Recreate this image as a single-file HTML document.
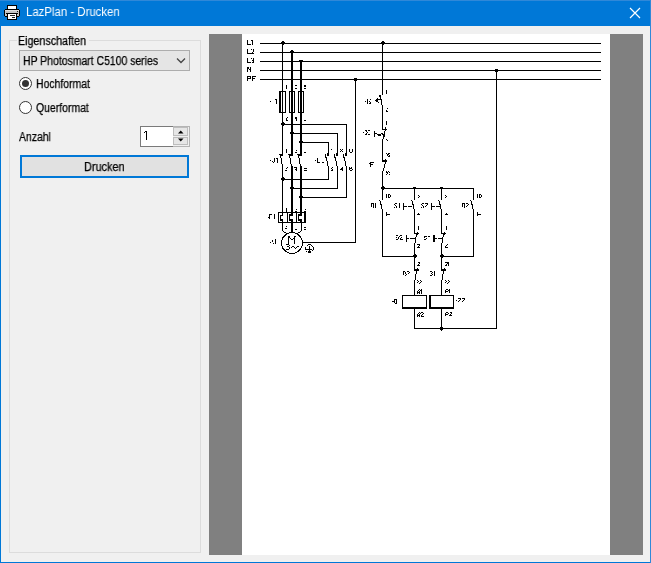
<!DOCTYPE html>
<html><head><meta charset="utf-8">
<style>
html,body{margin:0;padding:0;}
body{width:651px;height:563px;position:relative;overflow:hidden;background:#0078d7;font-family:"Liberation Sans",sans-serif;}
.abs{position:absolute;}
#client{position:absolute;left:1px;top:26px;width:649px;height:536px;background:#f0f0f0;}
.t{position:absolute;white-space:nowrap;font-size:12px;line-height:14px;color:#000;transform-origin:0 0;-webkit-text-stroke:0.25px currentColor;will-change:transform;}
#title{left:26px;top:5px;color:#fff;font-size:12px;}
#grp{position:absolute;left:9px;top:40px;width:190px;height:511px;border:1px solid #dcdcdc;}
#grpcap{left:17px;top:34px;background:#f0f0f0;padding:0 3px 0 1px;}
#combo{position:absolute;left:19px;top:50px;width:169px;height:19px;border:1px solid #adadad;background:#e5e5e5;}
.radio{position:absolute;width:13px;height:13px;box-sizing:border-box;border:1.4px solid #333;border-radius:50%;background:#fff;}
#spin{position:absolute;left:140px;top:126px;width:48px;height:19px;border:1px solid #b4b4b4;background:#f0f0f0;}
#btn{position:absolute;left:20px;top:155px;width:165px;height:19px;border:2px solid #0078d7;background:#e1e1e1;}
#gray{position:absolute;left:209px;top:34px;width:434px;height:521px;background:#808080;}
#page{position:absolute;left:242px;top:34px;width:368px;height:521px;background:#fff;}
svg{position:absolute;left:0;top:0;}
</style></head><body>
<div id="client"></div>
<div class="abs" style="left:0;top:0;width:651px;height:1px;background:#3088d8"></div>
<div class="abs" style="left:650px;top:0;width:1px;height:563px;background:#3088d8"></div>
<!-- title bar -->
<svg width="26" height="26" style="left:0;top:0" shape-rendering="crispEdges">
  <rect x="7" y="5" width="10" height="5" fill="#000"/>
  <rect x="8" y="6" width="8" height="3" fill="#fff"/>
  <rect x="5" y="9" width="14" height="8" fill="#000"/>
  <rect x="4" y="10" width="16" height="6" fill="#000"/>
  <rect x="5" y="10" width="14" height="6" fill="#c4c4c4"/>
  <rect x="5" y="10" width="14" height="1" fill="#dedede"/>
  <rect x="17" y="11" width="1" height="1" fill="#222"/>
  <rect x="6" y="13" width="12" height="1" fill="#000"/>
  <rect x="7" y="13" width="10" height="7" fill="#000"/>
  <rect x="8" y="14" width="8" height="5" fill="#fff"/>
  <rect x="10" y="15" width="5" height="1" fill="#222"/>
  <rect x="12" y="17" width="3" height="1" fill="#222"/>
</svg>
<div class="t" id="title" style="transform:scaleX(0.95);-webkit-text-stroke:0">LazPlan - Drucken</div>
<svg width="651" height="26" style="left:0;top:0">
  <path d="M630 8 L640 18 M640 8 L630 18" stroke="#fff" stroke-width="1.2"/>
</svg>
<div id="grp"></div>
<div class="t" id="grpcap" style="transform:scaleX(0.895)">Eigenschaften</div>
<div id="combo"></div>
<div class="t" style="left:23px;top:54px;transform:scaleX(0.87)">HP Photosmart C5100 series</div>
<svg width="651" height="200" style="left:0;top:0">
  <path d="M177 58.5 L181 62.5 L185 58.5" fill="none" stroke="#444" stroke-width="1.3"/>
</svg>
<div class="radio" style="left:19px;top:77px"></div>
<div class="abs" style="left:22px;top:80px;width:7px;height:7px;border-radius:50%;background:#333"></div>
<div class="t" style="left:36px;top:77px;transform:scaleX(0.87)">Hochformat</div>
<div class="radio" style="left:19px;top:101px"></div>
<div class="t" style="left:36px;top:101px;transform:scaleX(0.87)">Querformat</div>
<div class="t" style="left:19px;top:130px;transform:scaleX(0.87)">Anzahl</div>
<div id="spin"></div>
<div class="abs" style="left:140px;top:126px;width:32px;height:19px;border:1px solid #7a7a7a;border-right:none;background:#fff"></div>
<svg width="651" height="200" style="left:0;top:0" shape-rendering="crispEdges">
  <rect x="144" y="132" width="1" height="1" fill="#000"/>
  <rect x="145" y="131" width="1" height="1" fill="#000"/>
  <rect x="146" y="131" width="1" height="9" fill="#000"/>
</svg>
<div class="abs" style="left:173px;top:127px;width:15px;height:9px;background:#e6e6e6;border:1px solid #bdbdbd;box-sizing:border-box"></div>
<div class="abs" style="left:173px;top:137px;width:15px;height:8px;background:#e6e6e6;border:1px solid #bdbdbd;box-sizing:border-box"></div>
<svg width="651" height="200" style="left:0;top:0">
  <path d="M178 133.5 L183.5 133.5 L180.75 130.5 Z" fill="#000"/>
  <path d="M178 138.5 L183.5 138.5 L180.75 141.5 Z" fill="#000"/>
</svg>
<div id="btn"></div>
<div class="t" style="left:84px;top:160px;transform:scaleX(0.91)">Drucken</div>
<div id="gray"></div>
<div id="page"></div>
<svg id="sch" width="651" height="563" style="left:0;top:0" shape-rendering="crispEdges"><g fill="#000"><rect x="260" y="43" width="341" height="1"/><rect x="247" y="40" width="1" height="1"/><rect x="251" y="40" width="1" height="1"/><rect x="252" y="40" width="1" height="1"/><rect x="247" y="41" width="1" height="1"/><rect x="252" y="41" width="1" height="1"/><rect x="247" y="42" width="1" height="1"/><rect x="252" y="42" width="1" height="1"/><rect x="247" y="43" width="1" height="1"/><rect x="252" y="43" width="1" height="1"/><rect x="247" y="44" width="1" height="1"/><rect x="248" y="44" width="1" height="1"/><rect x="249" y="44" width="1" height="1"/><rect x="250" y="44" width="1" height="1"/><rect x="252" y="44" width="1" height="1"/><rect x="260" y="52" width="341" height="1"/><rect x="247" y="49" width="1" height="1"/><rect x="251" y="49" width="1" height="1"/><rect x="253" y="49" width="1" height="1"/><rect x="247" y="50" width="1" height="1"/><rect x="253" y="50" width="1" height="1"/><rect x="247" y="51" width="1" height="1"/><rect x="253" y="51" width="1" height="1"/><rect x="247" y="52" width="1" height="1"/><rect x="252" y="52" width="1" height="1"/><rect x="247" y="53" width="1" height="1"/><rect x="248" y="53" width="1" height="1"/><rect x="249" y="53" width="1" height="1"/><rect x="250" y="53" width="1" height="1"/><rect x="251" y="53" width="1" height="1"/><rect x="252" y="53" width="1" height="1"/><rect x="253" y="53" width="1" height="1"/><rect x="260" y="61" width="341" height="1"/><rect x="247" y="58" width="1" height="1"/><rect x="251" y="58" width="1" height="1"/><rect x="253" y="58" width="1" height="1"/><rect x="247" y="59" width="1" height="1"/><rect x="253" y="59" width="1" height="1"/><rect x="247" y="60" width="1" height="1"/><rect x="252" y="60" width="1" height="1"/><rect x="253" y="60" width="1" height="1"/><rect x="247" y="61" width="1" height="1"/><rect x="253" y="61" width="1" height="1"/><rect x="247" y="62" width="1" height="1"/><rect x="248" y="62" width="1" height="1"/><rect x="249" y="62" width="1" height="1"/><rect x="250" y="62" width="1" height="1"/><rect x="252" y="62" width="1" height="1"/><rect x="253" y="62" width="1" height="1"/><rect x="260" y="70" width="341" height="1"/><rect x="247" y="67" width="1" height="1"/><rect x="248" y="67" width="1" height="1"/><rect x="250" y="67" width="1" height="1"/><rect x="247" y="68" width="1" height="1"/><rect x="248" y="68" width="1" height="1"/><rect x="250" y="68" width="1" height="1"/><rect x="247" y="69" width="1" height="1"/><rect x="249" y="69" width="1" height="1"/><rect x="250" y="69" width="1" height="1"/><rect x="247" y="70" width="1" height="1"/><rect x="250" y="70" width="1" height="1"/><rect x="247" y="71" width="1" height="1"/><rect x="250" y="71" width="1" height="1"/><rect x="260" y="79" width="341" height="1"/><rect x="247" y="76" width="1" height="1"/><rect x="248" y="76" width="1" height="1"/><rect x="249" y="76" width="1" height="1"/><rect x="250" y="76" width="1" height="1"/><rect x="252" y="76" width="1" height="1"/><rect x="253" y="76" width="1" height="1"/><rect x="254" y="76" width="1" height="1"/><rect x="255" y="76" width="1" height="1"/><rect x="247" y="77" width="1" height="1"/><rect x="250" y="77" width="1" height="1"/><rect x="252" y="77" width="1" height="1"/><rect x="247" y="78" width="1" height="1"/><rect x="248" y="78" width="1" height="1"/><rect x="249" y="78" width="1" height="1"/><rect x="250" y="78" width="1" height="1"/><rect x="252" y="78" width="1" height="1"/><rect x="253" y="78" width="1" height="1"/><rect x="254" y="78" width="1" height="1"/><rect x="247" y="79" width="1" height="1"/><rect x="252" y="79" width="1" height="1"/><rect x="247" y="80" width="1" height="1"/><rect x="252" y="80" width="1" height="1"/><rect x="282" y="43" width="1" height="113"/><rect x="282" y="164" width="1" height="52"/><rect x="282" y="219" width="1" height="4"/><rect x="281" y="42" width="4" height="2"/><rect x="282" y="41" width="2" height="1"/><rect x="282" y="44" width="2" height="1"/><rect x="291" y="52" width="2" height="104"/><rect x="291" y="166" width="2" height="50"/><rect x="291" y="219" width="2" height="14"/><rect x="290" y="51" width="4" height="2"/><rect x="291" y="50" width="2" height="1"/><rect x="291" y="53" width="2" height="1"/><rect x="299" y="60" width="4" height="1"/><rect x="300" y="60" width="2" height="96"/><rect x="300" y="166" width="2" height="50"/><rect x="300" y="219" width="2" height="4"/><rect x="279" y="91" width="7" height="1"/><rect x="279" y="112" width="7" height="1"/><rect x="279" y="91" width="2" height="22"/><rect x="285" y="91" width="1" height="22"/><rect x="289" y="91" width="6" height="1"/><rect x="289" y="112" width="6" height="1"/><rect x="289" y="91" width="1" height="22"/><rect x="294" y="91" width="1" height="22"/><rect x="298" y="91" width="6" height="1"/><rect x="298" y="112" width="6" height="1"/><rect x="298" y="91" width="1" height="22"/><rect x="303" y="91" width="1" height="22"/><rect x="286" y="85" width="1" height="1"/><rect x="286" y="86" width="1" height="1"/><rect x="286" y="87" width="1" height="1"/><rect x="286" y="88" width="1" height="1"/><rect x="295" y="85" width="1" height="1"/><rect x="296" y="85" width="1" height="1"/><rect x="295" y="88" width="1" height="1"/><rect x="296" y="88" width="1" height="1"/><rect x="304" y="85" width="1" height="1"/><rect x="305" y="85" width="1" height="1"/><rect x="304" y="86" width="1" height="1"/><rect x="305" y="86" width="1" height="1"/><rect x="304" y="88" width="1" height="1"/><rect x="305" y="88" width="1" height="1"/><rect x="287" y="117" width="1" height="1"/><rect x="286" y="118" width="1" height="1"/><rect x="286" y="119" width="1" height="1"/><rect x="286" y="120" width="1" height="1"/><rect x="287" y="120" width="1" height="1"/><rect x="295" y="117" width="1" height="1"/><rect x="296" y="117" width="1" height="1"/><rect x="295" y="118" width="1" height="1"/><rect x="296" y="118" width="1" height="1"/><rect x="296" y="119" width="1" height="1"/><rect x="296" y="120" width="1" height="1"/><rect x="304" y="120" width="1" height="1"/><rect x="305" y="120" width="1" height="1"/><rect x="270" y="101" width="1" height="1"/><rect x="275" y="99" width="2" height="1"/><rect x="276" y="99" width="1" height="5"/><rect x="282" y="124" width="65" height="1"/><rect x="281" y="123" width="4" height="2"/><rect x="282" y="122" width="2" height="1"/><rect x="282" y="125" width="2" height="1"/><rect x="291" y="133" width="47" height="1"/><rect x="290" y="132" width="4" height="2"/><rect x="291" y="131" width="2" height="1"/><rect x="291" y="134" width="2" height="1"/><rect x="300" y="142" width="29" height="1"/><rect x="299" y="141" width="4" height="2"/><rect x="300" y="140" width="2" height="1"/><rect x="300" y="143" width="2" height="1"/><rect x="328" y="142" width="1" height="14"/><rect x="328" y="166" width="1" height="14"/><rect x="337" y="133" width="1" height="23"/><rect x="337" y="166" width="1" height="23"/><rect x="346" y="124" width="1" height="32"/><rect x="346" y="166" width="1" height="32"/><rect x="282" y="179" width="47" height="1"/><rect x="281" y="178" width="4" height="2"/><rect x="282" y="177" width="2" height="1"/><rect x="282" y="180" width="2" height="1"/><rect x="291" y="188" width="47" height="1"/><rect x="290" y="187" width="4" height="2"/><rect x="291" y="186" width="2" height="1"/><rect x="291" y="189" width="2" height="1"/><rect x="300" y="197" width="47" height="1"/><rect x="299" y="196" width="4" height="2"/><rect x="300" y="195" width="2" height="1"/><rect x="300" y="198" width="2" height="1"/><rect x="279" y="154" width="4" height="1"/><rect x="280" y="155" width="3" height="1"/><rect x="280" y="156" width="1" height="2"/><rect x="281" y="158" width="1" height="6"/><rect x="288" y="154" width="5" height="1"/><rect x="289" y="155" width="4" height="1"/><rect x="289" y="156" width="1" height="2"/><rect x="290" y="158" width="1" height="6"/><rect x="291" y="164" width="1" height="2"/><rect x="297" y="154" width="5" height="1"/><rect x="298" y="155" width="4" height="1"/><rect x="298" y="156" width="1" height="2"/><rect x="299" y="158" width="1" height="6"/><rect x="300" y="164" width="1" height="2"/><rect x="286" y="149" width="1" height="1"/><rect x="286" y="150" width="1" height="1"/><rect x="286" y="151" width="1" height="1"/><rect x="286" y="152" width="1" height="1"/><rect x="296" y="150" width="1" height="1"/><rect x="295" y="152" width="1" height="1"/><rect x="296" y="152" width="1" height="1"/><rect x="304" y="152" width="1" height="1"/><rect x="305" y="152" width="1" height="1"/><rect x="287" y="167" width="1" height="1"/><rect x="286" y="168" width="1" height="1"/><rect x="285" y="170" width="1" height="1"/><rect x="286" y="170" width="1" height="1"/><rect x="294" y="167" width="1" height="1"/><rect x="295" y="167" width="1" height="1"/><rect x="296" y="167" width="1" height="1"/><rect x="296" y="168" width="1" height="1"/><rect x="295" y="169" width="1" height="1"/><rect x="296" y="169" width="1" height="1"/><rect x="296" y="170" width="1" height="1"/><rect x="304" y="168" width="1" height="1"/><rect x="305" y="168" width="1" height="1"/><rect x="306" y="168" width="1" height="1"/><rect x="304" y="170" width="1" height="1"/><rect x="305" y="170" width="1" height="1"/><rect x="306" y="170" width="1" height="1"/><rect x="270" y="160" width="1" height="1"/><rect x="274" y="158" width="1" height="1"/><rect x="274" y="159" width="1" height="1"/><rect x="274" y="160" width="1" height="1"/><rect x="272" y="161" width="1" height="1"/><rect x="274" y="161" width="1" height="1"/><rect x="273" y="162" width="1" height="1"/><rect x="276" y="158" width="1" height="1"/><rect x="277" y="158" width="1" height="1"/><rect x="277" y="159" width="1" height="1"/><rect x="277" y="160" width="1" height="1"/><rect x="277" y="161" width="1" height="1"/><rect x="277" y="162" width="1" height="1"/><rect x="327" y="153" width="2" height="3"/><rect x="325" y="154" width="1" height="4"/><rect x="326" y="157" width="1" height="4"/><rect x="327" y="161" width="1" height="5"/><rect x="336" y="153" width="2" height="3"/><rect x="334" y="154" width="1" height="4"/><rect x="335" y="157" width="1" height="4"/><rect x="336" y="161" width="1" height="5"/><rect x="345" y="153" width="2" height="3"/><rect x="343" y="154" width="1" height="4"/><rect x="344" y="157" width="1" height="4"/><rect x="345" y="161" width="1" height="5"/><rect x="331" y="149" width="1" height="1"/><rect x="340" y="149" width="1" height="1"/><rect x="342" y="149" width="1" height="1"/><rect x="341" y="150" width="1" height="1"/><rect x="340" y="151" width="1" height="1"/><rect x="342" y="151" width="1" height="1"/><rect x="349" y="149" width="1" height="1"/><rect x="352" y="149" width="1" height="1"/><rect x="349" y="150" width="1" height="1"/><rect x="352" y="150" width="1" height="1"/><rect x="349" y="151" width="1" height="1"/><rect x="352" y="151" width="1" height="1"/><rect x="350" y="152" width="1" height="1"/><rect x="351" y="152" width="1" height="1"/><rect x="332" y="167" width="1" height="1"/><rect x="331" y="168" width="1" height="1"/><rect x="332" y="169" width="1" height="1"/><rect x="331" y="170" width="1" height="1"/><rect x="332" y="170" width="1" height="1"/><rect x="342" y="167" width="1" height="1"/><rect x="341" y="168" width="1" height="1"/><rect x="342" y="168" width="1" height="1"/><rect x="340" y="169" width="1" height="1"/><rect x="341" y="169" width="1" height="1"/><rect x="342" y="169" width="1" height="1"/><rect x="342" y="170" width="1" height="1"/><rect x="349" y="167" width="1" height="1"/><rect x="351" y="167" width="1" height="1"/><rect x="349" y="168" width="1" height="1"/><rect x="350" y="168" width="1" height="1"/><rect x="351" y="168" width="1" height="1"/><rect x="349" y="169" width="1" height="1"/><rect x="352" y="169" width="1" height="1"/><rect x="350" y="170" width="1" height="1"/><rect x="351" y="170" width="1" height="1"/><rect x="315" y="160" width="1" height="1"/><rect x="317" y="158" width="1" height="1"/><rect x="317" y="159" width="1" height="1"/><rect x="317" y="160" width="1" height="1"/><rect x="317" y="161" width="1" height="1"/><rect x="317" y="162" width="1" height="1"/><rect x="318" y="162" width="1" height="1"/><rect x="319" y="162" width="1" height="1"/><rect x="322" y="162" width="2" height="1"/><rect x="278" y="212" width="28" height="1"/><rect x="278" y="222" width="28" height="1"/><rect x="278" y="212" width="1" height="11"/><rect x="304" y="211" width="2" height="12"/><rect x="287" y="212" width="1" height="11"/><rect x="296" y="211" width="1" height="12"/><rect x="280" y="215" width="3" height="1"/><rect x="280" y="215" width="1" height="6"/><rect x="280" y="219" width="3" height="1"/><rect x="280" y="220" width="3" height="1"/><rect x="289" y="214" width="4" height="1"/><rect x="289" y="215" width="4" height="1"/><rect x="289" y="215" width="1" height="6"/><rect x="289" y="219" width="4" height="1"/><rect x="289" y="220" width="4" height="1"/><rect x="298" y="214" width="4" height="1"/><rect x="298" y="215" width="4" height="1"/><rect x="298" y="215" width="1" height="6"/><rect x="298" y="219" width="4" height="1"/><rect x="298" y="220" width="4" height="1"/><rect x="269" y="214" width="3" height="1"/><rect x="269" y="214" width="1" height="5"/><rect x="268" y="217" width="1" height="1"/><rect x="274" y="214" width="1" height="5"/><rect x="286" y="208" width="1" height="1"/><rect x="286" y="209" width="1" height="1"/><rect x="286" y="210" width="1" height="1"/><rect x="286" y="211" width="1" height="1"/><rect x="296" y="209" width="1" height="1"/><rect x="295" y="211" width="2" height="1"/><rect x="305" y="209" width="1" height="1"/><rect x="286" y="226" width="1" height="1"/><rect x="285" y="228" width="2" height="1"/><rect x="295" y="229" width="2" height="1"/><rect x="304" y="227" width="2" height="1"/><rect x="304" y="229" width="2" height="1"/><rect x="282" y="223" width="1" height="8"/><rect x="283" y="231" width="1" height="1"/><rect x="284" y="232" width="1" height="1"/><rect x="285" y="232" width="1" height="1"/><rect x="301" y="223" width="1" height="8"/><rect x="300" y="231" width="1" height="1"/><rect x="299" y="232" width="1" height="1"/><rect x="298" y="232" width="1" height="1"/><rect x="288" y="236" width="1" height="9"/><rect x="289" y="236" width="1" height="1"/><rect x="294" y="236" width="1" height="8"/><rect x="295" y="236" width="1" height="1"/><rect x="289" y="237" width="1" height="1"/><rect x="290" y="238" width="1" height="1"/><rect x="291" y="239" width="2" height="1"/><rect x="293" y="238" width="1" height="1"/><rect x="294" y="237" width="1" height="1"/><rect x="286" y="244" width="1" height="1"/><rect x="287" y="244" width="1" height="1"/><rect x="288" y="244" width="1" height="1"/><rect x="289" y="245" width="1" height="1"/><rect x="287" y="246" width="1" height="1"/><rect x="288" y="246" width="1" height="1"/><rect x="289" y="247" width="1" height="1"/><rect x="289" y="248" width="1" height="1"/><rect x="286" y="249" width="1" height="1"/><rect x="287" y="249" width="1" height="1"/><rect x="288" y="249" width="1" height="1"/><rect x="291" y="247" width="1" height="1"/><rect x="292" y="246" width="1" height="1"/><rect x="293" y="246" width="1" height="1"/><rect x="294" y="247" width="1" height="1"/><rect x="295" y="248" width="1" height="1"/><rect x="296" y="247" width="1" height="1"/><rect x="297" y="246" width="1" height="1"/><rect x="298" y="246" width="1" height="1"/><rect x="308" y="244" width="3" height="1"/><rect x="307" y="245" width="1" height="1"/><rect x="311" y="245" width="1" height="1"/><rect x="312" y="246" width="1" height="1"/><rect x="313" y="247" width="1" height="3"/><rect x="312" y="250" width="1" height="1"/><rect x="306" y="251" width="1" height="1"/><rect x="309" y="246" width="1" height="5"/><rect x="305" y="249" width="7" height="1"/><rect x="305" y="247" width="1" height="3"/><rect x="308" y="251" width="3" height="1"/><rect x="308" y="252" width="3" height="1"/><rect x="270" y="242" width="1" height="1"/><rect x="272" y="240" width="1" height="2"/><rect x="273" y="243" width="1" height="1"/><rect x="275" y="239" width="1" height="5"/><rect x="303" y="242" width="53" height="1"/><rect x="355" y="79" width="1" height="164"/><rect x="354" y="78" width="3" height="3"/><rect x="382" y="43" width="1" height="52"/><rect x="381" y="42" width="4" height="2"/><rect x="382" y="41" width="2" height="1"/><rect x="382" y="44" width="2" height="1"/><rect x="379" y="95" width="2" height="2"/><rect x="380" y="96" width="1" height="4"/><rect x="378" y="99" width="4" height="1"/><rect x="381" y="99" width="1" height="6"/><rect x="382" y="105" width="1" height="25"/><rect x="386" y="90" width="1" height="1"/><rect x="386" y="91" width="1" height="1"/><rect x="386" y="92" width="1" height="1"/><rect x="386" y="93" width="1" height="1"/><rect x="367" y="99" width="1" height="1"/><rect x="370" y="99" width="1" height="1"/><rect x="367" y="100" width="1" height="1"/><rect x="365" y="101" width="1" height="1"/><rect x="367" y="101" width="1" height="1"/><rect x="369" y="101" width="1" height="1"/><rect x="367" y="102" width="1" height="1"/><rect x="370" y="102" width="1" height="1"/><rect x="367" y="103" width="1" height="1"/><rect x="369" y="103" width="1" height="1"/><rect x="370" y="103" width="1" height="1"/><rect x="387" y="108" width="1" height="1"/><rect x="386" y="110" width="1" height="1"/><rect x="386" y="111" width="1" height="1"/><rect x="387" y="111" width="1" height="1"/><rect x="377" y="98" width="1" height="1"/><rect x="376" y="99" width="2" height="1"/><rect x="375" y="100" width="3" height="1"/><rect x="376" y="101" width="2" height="1"/><rect x="378" y="102" width="1" height="1"/><rect x="382" y="129" width="5" height="1"/><rect x="385" y="127" width="1" height="4"/><rect x="385" y="130" width="1" height="1"/><rect x="384" y="131" width="1" height="6"/><rect x="383" y="134" width="1" height="5"/><rect x="374" y="131" width="1" height="6"/><rect x="375" y="133" width="2" height="1"/><rect x="377" y="134" width="1" height="1"/><rect x="378" y="134" width="3" height="2"/><rect x="381" y="133" width="1" height="1"/><rect x="382" y="133" width="1" height="2"/><rect x="382" y="139" width="1" height="23"/><rect x="386" y="121" width="1" height="1"/><rect x="386" y="122" width="1" height="1"/><rect x="386" y="123" width="1" height="1"/><rect x="386" y="124" width="1" height="1"/><rect x="386" y="139" width="1" height="1"/><rect x="387" y="140" width="1" height="1"/><rect x="365" y="130" width="1" height="1"/><rect x="366" y="130" width="1" height="1"/><rect x="368" y="130" width="1" height="1"/><rect x="369" y="130" width="1" height="1"/><rect x="366" y="131" width="1" height="1"/><rect x="363" y="132" width="1" height="1"/><rect x="367" y="132" width="1" height="1"/><rect x="366" y="133" width="1" height="1"/><rect x="365" y="134" width="1" height="1"/><rect x="366" y="134" width="1" height="1"/><rect x="368" y="134" width="1" height="1"/><rect x="369" y="134" width="1" height="1"/><rect x="382" y="160" width="5" height="1"/><rect x="382" y="161" width="5" height="1"/><rect x="385" y="159" width="1" height="4"/><rect x="385" y="162" width="1" height="2"/><rect x="384" y="164" width="1" height="4"/><rect x="383" y="168" width="1" height="3"/><rect x="382" y="171" width="1" height="18"/><rect x="386" y="153" width="1" height="1"/><rect x="388" y="153" width="1" height="1"/><rect x="389" y="153" width="1" height="1"/><rect x="387" y="154" width="1" height="1"/><rect x="388" y="154" width="1" height="1"/><rect x="387" y="155" width="1" height="1"/><rect x="389" y="155" width="1" height="1"/><rect x="388" y="156" width="1" height="1"/><rect x="389" y="156" width="1" height="1"/><rect x="386" y="171" width="1" height="1"/><rect x="388" y="171" width="1" height="1"/><rect x="386" y="172" width="1" height="1"/><rect x="387" y="172" width="1" height="1"/><rect x="389" y="172" width="1" height="1"/><rect x="387" y="173" width="1" height="1"/><rect x="386" y="174" width="1" height="1"/><rect x="389" y="174" width="1" height="1"/><rect x="370" y="162" width="1" height="1"/><rect x="371" y="162" width="1" height="1"/><rect x="372" y="162" width="1" height="1"/><rect x="373" y="162" width="1" height="1"/><rect x="369" y="163" width="1" height="1"/><rect x="370" y="163" width="1" height="1"/><rect x="370" y="164" width="1" height="1"/><rect x="371" y="164" width="1" height="1"/><rect x="372" y="164" width="1" height="1"/><rect x="370" y="165" width="1" height="1"/><rect x="370" y="166" width="1" height="1"/><rect x="382" y="188" width="92" height="1"/><rect x="381" y="187" width="4" height="2"/><rect x="382" y="186" width="2" height="1"/><rect x="382" y="189" width="2" height="1"/><rect x="413" y="187" width="3" height="2"/><rect x="440" y="187" width="3" height="2"/><rect x="382" y="188" width="1" height="12"/><rect x="379" y="200" width="1" height="1"/><rect x="380" y="201" width="1" height="4"/><rect x="381" y="204" width="1" height="5"/><rect x="382" y="209" width="1" height="48"/><rect x="371" y="203" width="1" height="1"/><rect x="372" y="203" width="1" height="1"/><rect x="373" y="203" width="1" height="1"/><rect x="375" y="203" width="1" height="1"/><rect x="371" y="204" width="1" height="1"/><rect x="373" y="204" width="1" height="1"/><rect x="375" y="204" width="1" height="1"/><rect x="371" y="205" width="1" height="1"/><rect x="373" y="205" width="1" height="1"/><rect x="375" y="205" width="1" height="1"/><rect x="371" y="206" width="1" height="1"/><rect x="373" y="206" width="1" height="1"/><rect x="375" y="206" width="1" height="1"/><rect x="373" y="207" width="1" height="1"/><rect x="375" y="207" width="1" height="1"/><rect x="386" y="194" width="1" height="1"/><rect x="388" y="194" width="1" height="1"/><rect x="389" y="194" width="1" height="1"/><rect x="386" y="195" width="1" height="1"/><rect x="388" y="195" width="1" height="1"/><rect x="390" y="195" width="1" height="1"/><rect x="386" y="196" width="1" height="1"/><rect x="388" y="196" width="1" height="1"/><rect x="390" y="196" width="1" height="1"/><rect x="386" y="197" width="1" height="1"/><rect x="388" y="197" width="1" height="1"/><rect x="389" y="197" width="1" height="1"/><rect x="386" y="212" width="1" height="1"/><rect x="386" y="213" width="1" height="1"/><rect x="386" y="214" width="1" height="1"/><rect x="387" y="214" width="1" height="1"/><rect x="388" y="214" width="1" height="1"/><rect x="389" y="214" width="1" height="1"/><rect x="386" y="215" width="1" height="1"/><rect x="414" y="188" width="1" height="12"/><rect x="411" y="200" width="1" height="1"/><rect x="412" y="201" width="1" height="4"/><rect x="413" y="204" width="1" height="5"/><rect x="414" y="209" width="1" height="25"/><rect x="403" y="203" width="1" height="7"/><rect x="404" y="206" width="3" height="1"/><rect x="408" y="206" width="4" height="1"/><rect x="395" y="203" width="1" height="1"/><rect x="396" y="203" width="1" height="1"/><rect x="399" y="203" width="1" height="1"/><rect x="394" y="204" width="1" height="1"/><rect x="399" y="204" width="1" height="1"/><rect x="395" y="205" width="1" height="1"/><rect x="399" y="205" width="1" height="1"/><rect x="396" y="206" width="1" height="1"/><rect x="399" y="206" width="1" height="1"/><rect x="394" y="207" width="1" height="1"/><rect x="396" y="207" width="1" height="1"/><rect x="399" y="207" width="1" height="1"/><rect x="418" y="195" width="1" height="1"/><rect x="419" y="196" width="1" height="1"/><rect x="418" y="197" width="1" height="1"/><rect x="418" y="213" width="1" height="1"/><rect x="417" y="214" width="1" height="1"/><rect x="418" y="214" width="1" height="1"/><rect x="419" y="214" width="1" height="1"/><rect x="441" y="188" width="1" height="12"/><rect x="438" y="200" width="1" height="1"/><rect x="439" y="201" width="1" height="4"/><rect x="440" y="204" width="1" height="5"/><rect x="441" y="209" width="1" height="25"/><rect x="431" y="203" width="1" height="7"/><rect x="432" y="206" width="3" height="1"/><rect x="436" y="206" width="4" height="1"/><rect x="422" y="203" width="1" height="1"/><rect x="423" y="203" width="1" height="1"/><rect x="425" y="203" width="1" height="1"/><rect x="426" y="203" width="1" height="1"/><rect x="427" y="203" width="1" height="1"/><rect x="421" y="204" width="1" height="1"/><rect x="427" y="204" width="1" height="1"/><rect x="422" y="205" width="1" height="1"/><rect x="426" y="205" width="1" height="1"/><rect x="423" y="206" width="1" height="1"/><rect x="425" y="206" width="1" height="1"/><rect x="421" y="207" width="1" height="1"/><rect x="423" y="207" width="1" height="1"/><rect x="445" y="195" width="1" height="1"/><rect x="446" y="196" width="1" height="1"/><rect x="445" y="197" width="1" height="1"/><rect x="446" y="213" width="1" height="1"/><rect x="445" y="214" width="1" height="1"/><rect x="446" y="214" width="1" height="1"/><rect x="447" y="214" width="1" height="1"/><rect x="473" y="188" width="1" height="12"/><rect x="470" y="200" width="1" height="1"/><rect x="471" y="201" width="1" height="4"/><rect x="472" y="204" width="1" height="5"/><rect x="473" y="209" width="1" height="48"/><rect x="462" y="203" width="1" height="1"/><rect x="463" y="203" width="1" height="1"/><rect x="464" y="203" width="1" height="1"/><rect x="466" y="203" width="1" height="1"/><rect x="467" y="203" width="1" height="1"/><rect x="462" y="204" width="1" height="1"/><rect x="464" y="204" width="1" height="1"/><rect x="468" y="204" width="1" height="1"/><rect x="462" y="205" width="1" height="1"/><rect x="464" y="205" width="1" height="1"/><rect x="467" y="205" width="1" height="1"/><rect x="462" y="206" width="1" height="1"/><rect x="464" y="206" width="1" height="1"/><rect x="466" y="206" width="1" height="1"/><rect x="464" y="207" width="1" height="1"/><rect x="477" y="194" width="1" height="1"/><rect x="479" y="194" width="1" height="1"/><rect x="480" y="194" width="1" height="1"/><rect x="477" y="195" width="1" height="1"/><rect x="479" y="195" width="1" height="1"/><rect x="481" y="195" width="1" height="1"/><rect x="477" y="196" width="1" height="1"/><rect x="479" y="196" width="1" height="1"/><rect x="481" y="196" width="1" height="1"/><rect x="477" y="197" width="1" height="1"/><rect x="479" y="197" width="1" height="1"/><rect x="480" y="197" width="1" height="1"/><rect x="477" y="212" width="1" height="1"/><rect x="477" y="213" width="1" height="1"/><rect x="477" y="214" width="1" height="1"/><rect x="478" y="214" width="1" height="1"/><rect x="479" y="214" width="1" height="1"/><rect x="480" y="214" width="1" height="1"/><rect x="477" y="215" width="1" height="1"/><rect x="414" y="233" width="5" height="1"/><rect x="417" y="232" width="1" height="3"/><rect x="416" y="234" width="1" height="3"/><rect x="415" y="237" width="1" height="6"/><rect x="406" y="235" width="1" height="7"/><rect x="407" y="238" width="2" height="1"/><rect x="410" y="238" width="6" height="1"/><rect x="414" y="243" width="1" height="28"/><rect x="441" y="233" width="5" height="1"/><rect x="444" y="232" width="1" height="3"/><rect x="443" y="234" width="1" height="3"/><rect x="442" y="237" width="1" height="6"/><rect x="433" y="235" width="2" height="7"/><rect x="435" y="238" width="2" height="1"/><rect x="438" y="238" width="5" height="1"/><rect x="441" y="243" width="1" height="28"/><rect x="418" y="226" width="1" height="1"/><rect x="418" y="227" width="1" height="1"/><rect x="418" y="228" width="1" height="1"/><rect x="418" y="229" width="1" height="1"/><rect x="417" y="244" width="1" height="1"/><rect x="418" y="244" width="1" height="1"/><rect x="419" y="244" width="1" height="1"/><rect x="419" y="245" width="1" height="1"/><rect x="418" y="246" width="1" height="1"/><rect x="417" y="247" width="1" height="1"/><rect x="418" y="247" width="1" height="1"/><rect x="419" y="247" width="1" height="1"/><rect x="396" y="235" width="1" height="1"/><rect x="397" y="235" width="1" height="1"/><rect x="400" y="235" width="1" height="1"/><rect x="401" y="235" width="1" height="1"/><rect x="399" y="236" width="1" height="1"/><rect x="396" y="237" width="1" height="1"/><rect x="398" y="237" width="1" height="1"/><rect x="401" y="237" width="1" height="1"/><rect x="398" y="238" width="1" height="1"/><rect x="400" y="238" width="1" height="1"/><rect x="396" y="239" width="1" height="1"/><rect x="397" y="239" width="1" height="1"/><rect x="400" y="239" width="1" height="1"/><rect x="401" y="239" width="1" height="1"/><rect x="402" y="239" width="1" height="1"/><rect x="446" y="226" width="1" height="1"/><rect x="446" y="227" width="1" height="1"/><rect x="446" y="228" width="1" height="1"/><rect x="446" y="229" width="1" height="1"/><rect x="447" y="244" width="1" height="1"/><rect x="446" y="245" width="1" height="1"/><rect x="445" y="246" width="1" height="1"/><rect x="445" y="247" width="1" height="1"/><rect x="446" y="247" width="1" height="1"/><rect x="447" y="247" width="1" height="1"/><rect x="424" y="236" width="1" height="1"/><rect x="425" y="236" width="1" height="1"/><rect x="426" y="236" width="1" height="1"/><rect x="428" y="236" width="1" height="1"/><rect x="429" y="236" width="1" height="1"/><rect x="424" y="237" width="1" height="1"/><rect x="426" y="238" width="1" height="1"/><rect x="424" y="239" width="1" height="1"/><rect x="425" y="239" width="1" height="1"/><rect x="382" y="256" width="33" height="1"/><rect x="413" y="255" width="4" height="2"/><rect x="414" y="254" width="2" height="1"/><rect x="414" y="257" width="2" height="1"/><rect x="441" y="256" width="33" height="1"/><rect x="440" y="255" width="4" height="2"/><rect x="441" y="254" width="2" height="1"/><rect x="441" y="257" width="2" height="1"/><rect x="414" y="269" width="5" height="1"/><rect x="414" y="270" width="5" height="1"/><rect x="417" y="268" width="1" height="1"/><rect x="416" y="271" width="1" height="3"/><rect x="415" y="274" width="1" height="6"/><rect x="414" y="280" width="1" height="16"/><rect x="441" y="269" width="5" height="1"/><rect x="441" y="270" width="5" height="1"/><rect x="444" y="268" width="1" height="1"/><rect x="443" y="271" width="1" height="3"/><rect x="442" y="274" width="1" height="6"/><rect x="441" y="280" width="1" height="16"/><rect x="418" y="262" width="1" height="1"/><rect x="419" y="262" width="1" height="1"/><rect x="419" y="263" width="1" height="1"/><rect x="418" y="264" width="1" height="1"/><rect x="417" y="265" width="1" height="1"/><rect x="418" y="265" width="1" height="1"/><rect x="419" y="265" width="1" height="1"/><rect x="445" y="262" width="1" height="1"/><rect x="446" y="262" width="1" height="1"/><rect x="447" y="262" width="1" height="1"/><rect x="448" y="262" width="1" height="1"/><rect x="447" y="263" width="1" height="1"/><rect x="448" y="263" width="1" height="1"/><rect x="446" y="264" width="1" height="1"/><rect x="448" y="264" width="1" height="1"/><rect x="445" y="265" width="1" height="1"/><rect x="446" y="265" width="1" height="1"/><rect x="448" y="265" width="1" height="1"/><rect x="417" y="280" width="1" height="1"/><rect x="420" y="280" width="1" height="1"/><rect x="418" y="281" width="1" height="1"/><rect x="421" y="281" width="1" height="1"/><rect x="417" y="282" width="1" height="1"/><rect x="420" y="282" width="1" height="1"/><rect x="419" y="283" width="1" height="1"/><rect x="445" y="280" width="1" height="1"/><rect x="448" y="280" width="1" height="1"/><rect x="446" y="281" width="1" height="1"/><rect x="449" y="281" width="1" height="1"/><rect x="445" y="282" width="1" height="1"/><rect x="448" y="282" width="1" height="1"/><rect x="447" y="283" width="1" height="1"/><rect x="403" y="271" width="1" height="1"/><rect x="404" y="271" width="1" height="1"/><rect x="407" y="271" width="1" height="1"/><rect x="408" y="271" width="1" height="1"/><rect x="403" y="272" width="1" height="1"/><rect x="405" y="272" width="1" height="1"/><rect x="409" y="272" width="1" height="1"/><rect x="403" y="273" width="1" height="1"/><rect x="405" y="273" width="1" height="1"/><rect x="408" y="273" width="1" height="1"/><rect x="403" y="274" width="1" height="1"/><rect x="406" y="274" width="1" height="1"/><rect x="405" y="275" width="1" height="1"/><rect x="430" y="271" width="1" height="1"/><rect x="431" y="271" width="1" height="1"/><rect x="434" y="271" width="1" height="1"/><rect x="432" y="272" width="1" height="1"/><rect x="434" y="272" width="1" height="1"/><rect x="431" y="273" width="1" height="1"/><rect x="434" y="273" width="1" height="1"/><rect x="432" y="274" width="1" height="1"/><rect x="434" y="274" width="1" height="1"/><rect x="430" y="275" width="1" height="1"/><rect x="431" y="275" width="1" height="1"/><rect x="434" y="275" width="1" height="1"/><rect x="419" y="289" width="1" height="1"/><rect x="421" y="289" width="1" height="1"/><rect x="418" y="290" width="1" height="1"/><rect x="420" y="290" width="1" height="1"/><rect x="421" y="290" width="1" height="1"/><rect x="417" y="291" width="1" height="1"/><rect x="419" y="291" width="1" height="1"/><rect x="421" y="291" width="1" height="1"/><rect x="417" y="292" width="1" height="1"/><rect x="418" y="292" width="1" height="1"/><rect x="419" y="292" width="1" height="1"/><rect x="421" y="292" width="1" height="1"/><rect x="417" y="293" width="1" height="1"/><rect x="419" y="293" width="1" height="1"/><rect x="421" y="293" width="1" height="1"/><rect x="446" y="289" width="1" height="1"/><rect x="447" y="289" width="1" height="1"/><rect x="449" y="289" width="1" height="1"/><rect x="445" y="290" width="1" height="1"/><rect x="448" y="290" width="1" height="1"/><rect x="449" y="290" width="1" height="1"/><rect x="445" y="291" width="1" height="1"/><rect x="446" y="291" width="1" height="1"/><rect x="447" y="291" width="1" height="1"/><rect x="449" y="291" width="1" height="1"/><rect x="445" y="292" width="1" height="1"/><rect x="449" y="292" width="1" height="1"/><rect x="402" y="295" width="25" height="1"/><rect x="402" y="307" width="25" height="2"/><rect x="402" y="295" width="1" height="14"/><rect x="426" y="295" width="1" height="14"/><rect x="429" y="295" width="25" height="1"/><rect x="429" y="307" width="25" height="2"/><rect x="429" y="295" width="2" height="14"/><rect x="453" y="295" width="1" height="14"/><rect x="394" y="299" width="1" height="1"/><rect x="395" y="299" width="1" height="1"/><rect x="396" y="299" width="1" height="1"/><rect x="394" y="300" width="1" height="1"/><rect x="396" y="300" width="1" height="1"/><rect x="392" y="301" width="1" height="1"/><rect x="393" y="301" width="1" height="1"/><rect x="394" y="301" width="1" height="1"/><rect x="396" y="301" width="1" height="1"/><rect x="394" y="302" width="1" height="1"/><rect x="396" y="302" width="1" height="1"/><rect x="395" y="303" width="1" height="1"/><rect x="396" y="303" width="1" height="1"/><rect x="458" y="298" width="1" height="1"/><rect x="459" y="298" width="1" height="1"/><rect x="460" y="298" width="1" height="1"/><rect x="462" y="298" width="1" height="1"/><rect x="463" y="298" width="1" height="1"/><rect x="464" y="298" width="1" height="1"/><rect x="460" y="299" width="1" height="1"/><rect x="464" y="299" width="1" height="1"/><rect x="456" y="300" width="1" height="1"/><rect x="459" y="300" width="1" height="1"/><rect x="463" y="300" width="1" height="1"/><rect x="458" y="301" width="1" height="1"/><rect x="462" y="301" width="1" height="1"/><rect x="419" y="312" width="1" height="1"/><rect x="421" y="312" width="1" height="1"/><rect x="422" y="312" width="1" height="1"/><rect x="418" y="313" width="1" height="1"/><rect x="420" y="313" width="1" height="1"/><rect x="423" y="313" width="1" height="1"/><rect x="417" y="314" width="1" height="1"/><rect x="419" y="314" width="1" height="1"/><rect x="422" y="314" width="1" height="1"/><rect x="417" y="315" width="1" height="1"/><rect x="418" y="315" width="1" height="1"/><rect x="419" y="315" width="1" height="1"/><rect x="421" y="315" width="1" height="1"/><rect x="417" y="316" width="1" height="1"/><rect x="419" y="316" width="1" height="1"/><rect x="421" y="316" width="1" height="1"/><rect x="422" y="316" width="1" height="1"/><rect x="423" y="316" width="1" height="1"/><rect x="446" y="312" width="1" height="1"/><rect x="447" y="312" width="1" height="1"/><rect x="450" y="312" width="1" height="1"/><rect x="451" y="312" width="1" height="1"/><rect x="445" y="313" width="1" height="1"/><rect x="448" y="313" width="1" height="1"/><rect x="451" y="313" width="1" height="1"/><rect x="445" y="314" width="1" height="1"/><rect x="446" y="314" width="1" height="1"/><rect x="447" y="314" width="1" height="1"/><rect x="450" y="314" width="1" height="1"/><rect x="445" y="315" width="1" height="1"/><rect x="449" y="315" width="1" height="1"/><rect x="450" y="315" width="1" height="1"/><rect x="451" y="315" width="1" height="1"/><rect x="414" y="309" width="1" height="20"/><rect x="441" y="309" width="1" height="20"/><rect x="414" y="328" width="83" height="1"/><rect x="440" y="327" width="3" height="3"/><rect x="441" y="326" width="1" height="1"/><rect x="441" y="330" width="1" height="1"/><rect x="496" y="70" width="1" height="259"/><rect x="495" y="69" width="3" height="3"/></g><circle cx="292" cy="243" r="10.5" fill="none" stroke="#000" stroke-width="1"/></svg>
</body></html>
